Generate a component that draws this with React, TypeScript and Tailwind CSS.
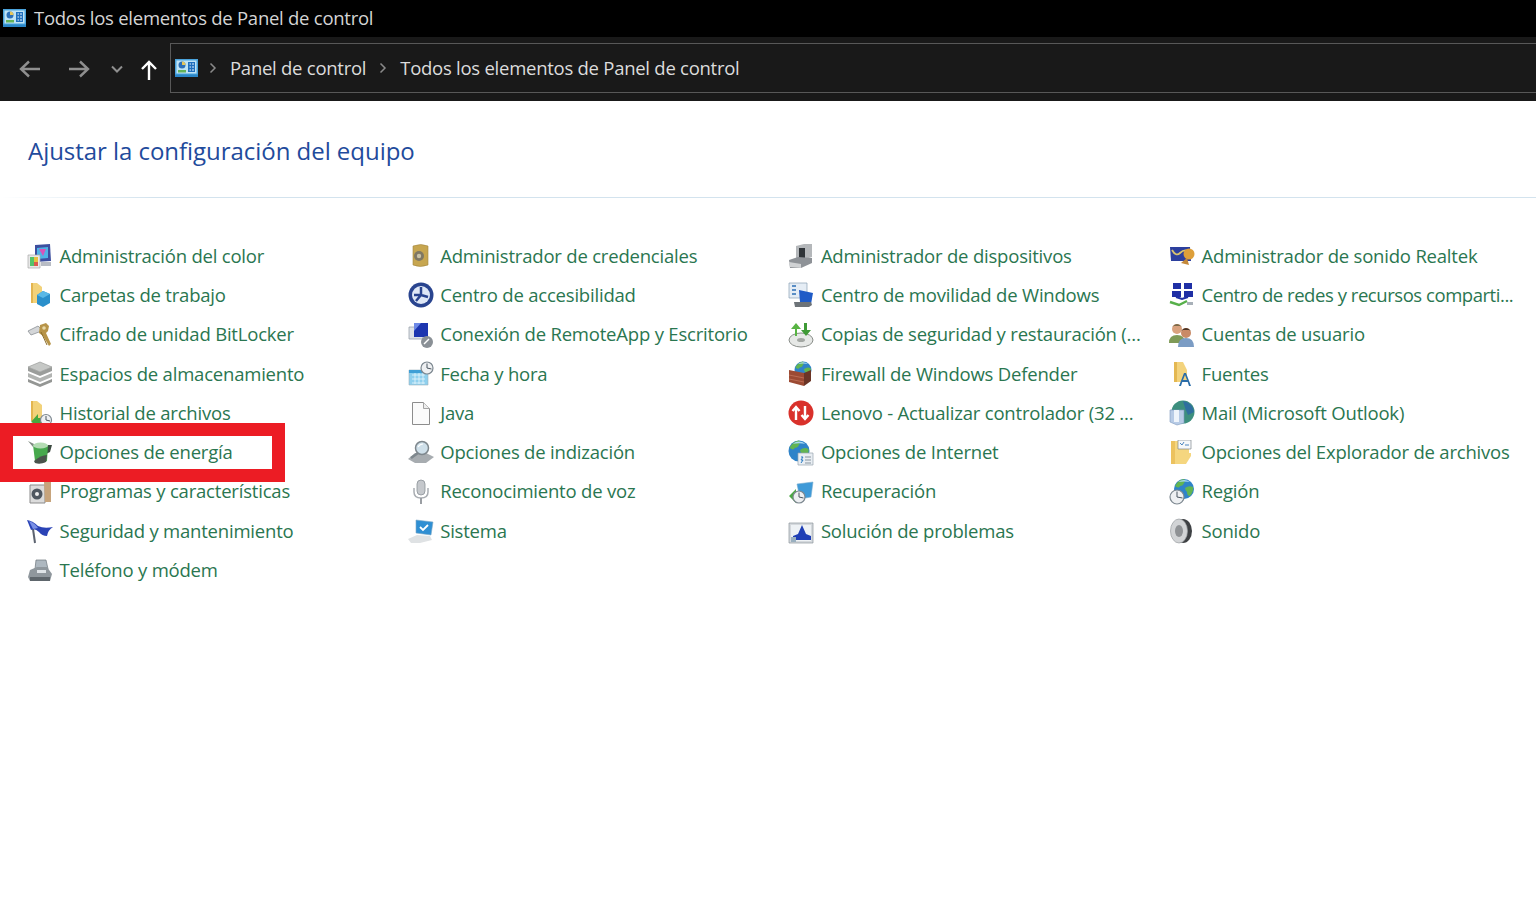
import React from "react";

const Svg = ({ children }: { children: React.ReactNode }) => (
  <svg viewBox="0 0 26 26" className="w-[26px] h-[26px] shrink-0 blur-[0.35px]">
    {children}
  </svg>
);

const Folder = () => (
  <>
    <path d="M4 1h6l5 4v16H4z" fill="#f2d27a" />
    <path d="M4 1h2v20H4z" fill="#e3b550" />
  </>
);

const Clock = ({ x, y, r }: { x: number; y: number; r: number }) => (
  <>
    <circle cx={x} cy={y} r={r} fill="#eef0f2" stroke="#7d8890" strokeWidth="1.2" />
    <path d={`M${x} ${y - r + 1.5}V${y}l${r - 1.5} 1`} stroke="#4b5660" strokeWidth="1" fill="none" />
  </>
);

// globe drawn at r=10 around 0,0 then moved into place
const Globe = ({ x, y, r }: { x: number; y: number; r: number }) => (
  <g transform={`translate(${x} ${y}) scale(${r / 10})`}>
    <circle r="10" fill="#2f83c9" />
    <path d="M-9-3q3-6 9-7 2 2 0 4-1 3-4 3-1 3-5 0z" fill="#62b552" />
    <path d="M1-1q4-3 8-1 1 4-3 9-3 0-3-4-2-2-2-4z" fill="#62b552" />
    <path d="M-6-7q6-4 12 0-6-1-12 0z" fill="#a9d8f2" />
  </g>
);

const icons: Record<string, React.ReactNode> = {
  color: (
    <Svg>
      <path d="M8 2l15-1 1 17-16 1z" fill="#3d4f9f" />
      <path d="M10 5l11-1v11l-11 1z" fill="#4fb4e6" />
      <path d="M12 6l7 0-3 7z" fill="#d854b8" />
      <path d="M1 12h12v13H1z" fill="#e8e8e8" stroke="#aaa" strokeWidth=".7" />
      <path d="M3 14h4v9H3z" fill="#54c36a" />
      <path d="M7 14h4v5H7z" fill="#e8c13f" />
      <path d="M7 19h4v4H7z" fill="#dc5a4e" />
      <path d="M14 19h10v4H14z" fill="#b8bcc4" />
    </Svg>
  ),
  work: (
    <Svg>
      <Folder />
      <path d="M16 9l7 3v9l-7 4-6-3v-9z" fill="#2a8fcb" />
      <path d="M10 13l6 3 7-4-7-3z" fill="#5ab8e6" />
    </Svg>
  ),
  bitlocker: (
    <Svg>
      <path d="M1 9l10-5 4 4-3 2-8 3z" fill="#d4d6d8" stroke="#8c9096" strokeWidth=".8" />
      <path d="M13 3l6-2 3 3-1 5-2 2 5 11-2 2-6-10-4-3z" fill="#b79449" />
      <circle cx="17" cy="6" r="1.800" fill="#e8d9a8" />
      <path d="M14 10l6 13" stroke="#8c6e2c" strokeWidth="1" />
    </Svg>
  ),
  storage: (
    <Svg>
      <path d="M1 6l12-5 12 5-12 5z" fill="#c6c8c6" stroke="#8f918f" strokeWidth=".6" />
      <path d="M1 6v4l12 5 12-5V6l-12 5z" fill="#9b9d9b" />
      <path d="M1 12v4l12 5 12-5v-4l-12 5z" fill="#b2b4b2" />
      <path d="M1 18v3l12 5 12-5v-3l-12 5z" fill="#949694" />
    </Svg>
  ),
  history: (
    <Svg>
      <Folder />
      <path d="M4 22l7-8v4h5v5h-6v2z" fill="#45a83f" />
      <Clock x={19} y={20} r={5.5} />
    </Svg>
  ),
  power: (
    <Svg>
      <path d="M1 1l6 3-1 3z" fill="#7e8a80" />
      <path d="M20 5h5l-2 7-4 2z" fill="#3c4a40" />
      <path d="M6 5h15l-1 16q-6 4-12 0z" fill="#47a94d" />
      <ellipse cx="13.500" cy="5.500" rx="7.500" ry="3" fill="#b4dcb3" />
      <path d="M7 21q7-6 13-6l-1 7q-6 3-11 1z" fill="#4a534c" />
    </Svg>
  ),
  programs: (
    <Svg>
      <path d="M3 6h15v18H3z" fill="#dcdcdc" stroke="#8b8b8b" />
      <path d="M17 3h7v20h-6z" fill="#c7a47c" />
      <circle cx="10" cy="15" r="5.500" fill="#4f5760" />
      <circle cx="10" cy="15" r="2" fill="#eee" />
    </Svg>
  ),
  security: (
    <Svg>
      <path d="M5 4l3 21" stroke="#5c6370" strokeWidth="2" />
      <path d="M0 2q6 1 11 6 6 3 15 1-5 3-6 9-5 0-8-4-4-4-8-2z" fill="#2a43b6" />
      <path d="M2 3q6 2 9 7l-5 1z" fill="#7a90e6" />
    </Svg>
  ),
  phone: (
    <Svg>
      <path d="M9 3h10l2 9H8z" fill="#aeb8c0" stroke="#6d767d" strokeWidth=".7" />
      <path d="M3 13l7-3h10l5 7-2 7H3l-2-4z" fill="#8f979d" />
      <path d="M3 20h20v4H3z" fill="#5e666c" />
      <path d="M10 13h9v3h-9z" fill="#dfe4e8" />
    </Svg>
  ),
  credentials: (
    <Svg>
      <path d="M5 3q8-3 15 0v19q-8 3-15 0z" fill="#c7a650" stroke="#a38740" strokeWidth=".6" />
      <circle cx="11" cy="13" r="5" fill="#7f7864" />
      <circle cx="11" cy="13" r="2.200" fill="#c9c2a6" />
    </Svg>
  ),
  access: (
    <Svg>
      <circle cx="13" cy="13" r="12.500" fill="#29448f" />
      <circle cx="13" cy="13" r="9" fill="#dfe8f6" />
      <path d="M13 5v8l7 2M13 13l-5 6M13 13H6" stroke="#29448f" strokeWidth="2.500" fill="none" />
    </Svg>
  ),
  remote: (
    <Svg>
      <path d="M1 5h14v12H1z" fill="#dfe3e8" stroke="#8f98a3" strokeWidth=".7" />
      <path d="M6 1h14v14H6z" fill="#1d36b0" />
      <path d="M6 1h7l-7 8z" fill="#6f8ae6" />
      <circle cx="19" cy="20" r="6" fill="#8a9096" />
      <path d="M16 22l5-5" stroke="#fff" strokeWidth="1.500" />
    </Svg>
  ),
  date: (
    <Svg>
      <path d="M1 9h19v15H1z" fill="#8fd0ee" stroke="#9fb2bd" strokeWidth=".6" />
      <path d="M1 9h19v3H1z" fill="#3f9fd6" />
      <path d="M4 14h13M4 18h13M4 22h13M7 12v11M11 12v11M15 12v11" stroke="#e7f6fd" strokeWidth=".8" />
      <Clock x={19} y={7} r={6} />
    </Svg>
  ),
  java: (
    <Svg>
      <path d="M4.500 2.500h11l6 6v16h-17z" fill="#fbfbfb" stroke="#8d8d8d" />
      <path d="M15.500 2.500v6h6" fill="#eeeeee" stroke="#a5a5a5" />
    </Svg>
  ),
  index: (
    <Svg>
      <path d="M0 19l7-6 11 0 8 4-8 6H7z" fill="#a7acb0" />
      <path d="M10 13l-7 5" stroke="#7e878d" strokeWidth="2.500" />
      <circle cx="14" cy="8" r="6.500" fill="#cfe0ea" stroke="#7e878d" strokeWidth="1.500" />
      <path d="M10 7q2-3 5-3" stroke="#fff" strokeWidth="1.200" fill="none" />
    </Svg>
  ),
  voice: (
    <Svg>
      <rect x="9" y="1" width="8" height="15" rx="4" fill="#c5c8cc" stroke="#8c9298" strokeWidth=".8" />
      <path d="M6 9v4q0 6 7 6t7-6V9" fill="none" stroke="#a9adb2" strokeWidth="1.500" />
      <path d="M13 19v6" stroke="#9a9ea3" strokeWidth="2" />
    </Svg>
  ),
  system: (
    <Svg>
      <path d="M8 2l17 2-2 13-15-2z" fill="#2f8fd3" stroke="#7fa9c6" strokeWidth=".6" />
      <path d="M12 9l3 3 5-5" stroke="#fff" strokeWidth="1.800" fill="none" />
      <path d="M0 21l9-4 13 1 2 4-12 3H3z" fill="#dfe2e4" />
    </Svg>
  ),
  devices: (
    <Svg>
      <path d="M8 3l8-2h8v13l-10 3H8z" fill="#b4b7ba" />
      <path d="M11 5h6v11h-6z" fill="#2f3438" />
      <path d="M1 17l9-3 14 1v5l-11 5H2z" fill="#8e9297" />
      <path d="M1 19l12 2v4l-11-1z" fill="#d0d2d4" />
    </Svg>
  ),
  mobility: (
    <Svg>
      <path d="M1 1h18v15H1z" fill="#e5edf5" stroke="#8aa0b5" strokeWidth=".7" />
      <path d="M4 4h4M4 8h4M4 12h4" stroke="#2c6fb5" strokeWidth="1.500" />
      <path d="M11 8l14 3-2 11-11-2z" fill="#1f5bc7" />
      <path d="M6 20h17l1 3-3 2H7z" fill="#6d7378" />
    </Svg>
  ),
  backup: (
    <Svg>
      <ellipse cx="13" cy="18" rx="12" ry="7" fill="#e6e8e6" stroke="#888c88" />
      <ellipse cx="13" cy="18" rx="4" ry="2" fill="#a3a7a3" />
      <path d="M7 14V7H3l5-6 5 6H9v7z" fill="#58b443" />
      <path d="M16 1v7h-3l5 6 5-6h-4V1z" fill="#3f9a36" />
    </Svg>
  ),
  firewall: (
    <Svg>
      <Globe x={15} y={9} r={8.500} />
      <path d="M1 9l15 3v13L1 21z" fill="#9c4a33" />
      <path d="M16 12l7-3v11l-7 5z" fill="#6b3526" />
      <path d="M1 14l15 3M1 18l15 3" stroke="#c77a60" strokeWidth=".7" />
    </Svg>
  ),
  lenovo: (
    <Svg>
      <circle cx="13" cy="13" r="12.500" fill="#d9312b" />
      <path d="M8 20V8M4.500 11L8 7l3.500 4" stroke="#fff" strokeWidth="2.400" fill="none" />
      <path d="M17 6v12M13.500 15l3.500 4 3.500-4" stroke="#fff" strokeWidth="2.400" fill="none" />
    </Svg>
  ),
  internet: (
    <Svg>
      <Globe x={11} y={11} r={10.500} />
      <path d="M10 13h15v12H10z" fill="#e9eef3" stroke="#98a5b0" strokeWidth=".7" />
      <path d="M13 17h2l-2 3h2l-2 3" stroke="#2a7cc4" strokeWidth="1" fill="none" />
      <path d="M17 17h6M17 20h6M17 23h6" stroke="#8995a0" strokeWidth="1" />
    </Svg>
  ),
  recovery: (
    <Svg>
      <path d="M9 5l16-2-2 15-11 2z" fill="#3f9ad8" stroke="#7aaed2" strokeWidth=".6" />
      <path d="M1 17l7-7v3h6v8H8v3z" fill="#4aa843" />
      <Clock x={11} y={18} r={6} />
    </Svg>
  ),
  trouble: (
    <Svg>
      <path d="M1 5h24v20H1z" fill="#d5d9dd" stroke="#8d959c" strokeWidth=".7" />
      <path d="M3 7h20v16H3z" fill="#eef2f5" />
      <path d="M5 22v-4l5-2 4-9 4 9 5 2v4z" fill="#1f3fb5" />
      <path d="M3 19h5v5H3z" fill="#9ab0c0" />
    </Svg>
  ),
  realtek: (
    <Svg>
      <path d="M1 4h20l1 14H2z" fill="#2c3f9e" />
      <path d="M3 7q4 7 8 3t8-2" stroke="#d9c46f" strokeWidth="1.800" fill="none" />
      <circle cx="20" cy="11" r="5.500" fill="#dd9f3a" />
      <path d="M12 20l6-5 2 7z" fill="#c4883a" />
    </Svg>
  ),
  network: (
    <Svg>
      <path d="M4 1h8v6H4zM15 1h8v6h-8zM3 9h9v6H3zM15 9h9v6h-9z" fill="#1f2fa5" />
      <path d="M7 15l6 2 6-2" stroke="#1f2fa5" strokeWidth="2" fill="none" />
      <path d="M1 20l9 3 8-4" stroke="#57b04a" strokeWidth="2.400" fill="none" />
      <path d="M18 20h6v3h-6z" fill="#a8b0b8" />
    </Svg>
  ),
  users: (
    <Svg>
      <circle cx="8" cy="7" r="5" fill="#d9a27e" />
      <path d="M3 5q5-6 10 0l-2-1H5z" fill="#7b6a4a" />
      <path d="M0 21q0-8 8-8t8 8z" fill="#7f9a57" />
      <circle cx="17" cy="11" r="5" fill="#c98a66" />
      <path d="M12 9q5-6 10 0l-2-1h-6z" fill="#4a3526" />
      <path d="M9 25q0-9 8-9t8 9z" fill="#7b9cc4" />
    </Svg>
  ),
  fonts: (
    <Svg>
      <path d="M5 1h9l4 8v12H5z" fill="#f3d37d" />
      <path d="M5 1h3v20H5z" fill="#e4b852" />
      <path d="M10 25l5-13h2l5 13h-2l-1.300-4h-5.400l-1.300 4zM14 19h4l-2-5z" fill="#2a6ca8" />
    </Svg>
  ),
  mail: (
    <Svg>
      <circle cx="14" cy="12" r="11.500" fill="#3d8f7e" />
      <path d="M14 1q10 2 11 11l-6 3q-3-6-5-14z" fill="#2f6f9f" />
      <path d="M1 10h14v13l-7 2-7-3z" fill="#b7cbe6" stroke="#7e98bd" strokeWidth=".6" />
      <path d="M5 10h5v12H5z" fill="#eef4fb" />
    </Svg>
  ),
  folderOpts: (
    <Svg>
      <path d="M2 1h18v12l2 0v3l-5 8H2z" fill="#f5d67f" />
      <path d="M2 1h4v23H2z" fill="#ecc25f" />
      <path d="M9 0h13v9H9z" fill="#f6f8fa" stroke="#7e868e" strokeWidth=".7" />
      <path d="M11 3l2 2 2-3M16 5h4" stroke="#3a78b8" strokeWidth=".9" fill="none" />
    </Svg>
  ),
  region: (
    <Svg>
      <Globe x={15} y={10} r={10} />
      <Clock x={8} y={18} r={7} />
    </Svg>
  ),
  sound: (
    <Svg>
      <ellipse cx="14" cy="13" rx="9" ry="12" fill="#3e4144" />
      <ellipse cx="10" cy="13" rx="8.500" ry="12" fill="#d2d4d6" stroke="#9a9da0" strokeWidth=".7" />
      <ellipse cx="10" cy="13" rx="4" ry="6" fill="#8f9295" />
    </Svg>
  ),
};

const columns = [
  [
    ["color", "Administración del color"],
    ["work", "Carpetas de trabajo"],
    ["bitlocker", "Cifrado de unidad BitLocker"],
    ["storage", "Espacios de almacenamiento"],
    ["history", "Historial de archivos"],
    ["power", "Opciones de energía"],
    ["programs", "Programas y características"],
    ["security", "Seguridad y mantenimiento"],
    ["phone", "Teléfono y módem"],
  ],
  [
    ["credentials", "Administrador de credenciales"],
    ["access", "Centro de accesibilidad"],
    ["remote", "Conexión de RemoteApp y Escritorio"],
    ["date", "Fecha y hora"],
    ["java", "Java"],
    ["index", "Opciones de indización"],
    ["voice", "Reconocimiento de voz"],
    ["system", "Sistema"],
  ],
  [
    ["devices", "Administrador de dispositivos"],
    ["mobility", "Centro de movilidad de Windows"],
    ["backup", "Copias de seguridad y restauración (..."],
    ["firewall", "Firewall de Windows Defender"],
    ["lenovo", "Lenovo - Actualizar controlador (32 ..."],
    ["internet", "Opciones de Internet"],
    ["recovery", "Recuperación"],
    ["trouble", "Solución de problemas"],
  ],
  [
    ["realtek", "Administrador de sonido Realtek"],
    ["network", "Centro de redes y recursos comparti..."],
    ["users", "Cuentas de usuario"],
    ["fonts", "Fuentes"],
    ["mail", "Mail (Microsoft Outlook)"],
    ["folderOpts", "Opciones del Explorador de archivos"],
    ["region", "Región"],
    ["sound", "Sonido"],
  ],
];

const PanelIcon = () => (
  <svg viewBox="0 0 23 18" className="w-[23px] h-[18px] shrink-0">
    <path d="M0 0h23v18H0z" fill="#4aa3dc" />
    <path d="M1.500 1.500h20v13h-20z" fill="#bfe3f6" />
    <circle cx="7" cy="6" r="3.500" fill="#2d6fb8" />
    <path d="M7 6V2.500A3.500 3.500 0 0 1 10.500 6z" fill="#e6c65a" />
    <path d="M3 11h8v2.500H3z" fill="#62b35a" />
    <path d="M13 3h7v10h-7z" fill="#1f6fbe" />
    <path d="M14.500 5h1.500M17 5h2M14.500 8h1.500M17 8h2M14.500 11h1.500M17 11h2" stroke="#e6f4fc" strokeWidth="1" />
    <path d="M0 15.500h23V18H0z" fill="#2a86c8" />
  </svg>
);

const Chevron = () => (
  <svg viewBox="0 0 8 12" className="w-2 h-3 shrink-0" fill="none" stroke="#8a8a8a" strokeWidth="1.500">
    <path d="M1.500 1.500L6 6l-4.500 4.500" />
  </svg>
);

export default function App() {
  return (
    <div className="h-[907px] bg-white overflow-hidden font-['Open_Sans',sans-serif]">
      <div className="h-[37px] bg-black flex items-center pl-[3px] pb-[1px] gap-[8px] text-[#d4d4d4] text-[18.5px] tracking-[-0.26px]">
        <PanelIcon />
        <span>Todos los elementos de Panel de control</span>
      </div>

      <div className="h-[64px] bg-[#191919] flex">
        <div className="w-[170px] flex items-center pl-[19px] pb-[1px]">
          <svg viewBox="0 0 22 18" className="w-[22px] h-[18px]" fill="none" stroke="#8f8f8f" strokeWidth="2.400">
            <path d="M21 9H2M10 1.500L2 9l8 7.500" />
          </svg>
          <svg viewBox="0 0 22 18" className="w-[22px] h-[18px] ml-[27px]" fill="none" stroke="#8f8f8f" strokeWidth="2.400">
            <path d="M1 9h19M12 1.500L20 9l-8 7.500" />
          </svg>
          <svg viewBox="0 0 12 8" className="w-3 h-2 ml-[21px]" fill="none" stroke="#8f8f8f" strokeWidth="2">
            <path d="M1 1.500l5 5 5-5" />
          </svg>
          <svg viewBox="0 0 16 20" className="w-4 h-5 ml-[18px] mt-[3px]" fill="none" stroke="#ffffff" strokeWidth="2.400">
            <path d="M8 20V2M1 9l7-7 7 7" />
          </svg>
        </div>
        <div className="flex-1 mt-[6px] h-[50px] border border-r-0 border-[#585858] flex items-center pl-[4px] text-[#dcdcdc] text-[18.5px] tracking-[-0.26px]">
          <PanelIcon />
          <span className="ml-[11px]"><Chevron /></span>
          <span className="ml-[13px]">Panel de control</span>
          <span className="ml-[13px]"><Chevron /></span>
          <span className="ml-[13px]">Todos los elementos de Panel de control</span>
        </div>
      </div>

      <div className="h-[96px] pl-[28px] pt-[32px] text-[#1f4b9c] text-[24px] leading-[36px] tracking-[-0.04px]">
        Ajustar la configuración del equipo
      </div>
      <div className="h-px bg-gradient-to-r from-white to-[#d3e3ee] to-[10%]" />

      <div className="flex pl-[27px] pt-[38.4px]">
        {columns.map((col, i) => (
          <div key={i} className="w-[380.7px] shrink-0 flex flex-col">
            {col.map(([icon, label]) => (
              <div key={label} className="relative h-[39.3px] flex items-center gap-[6.5px]">
                {label === "Opciones de energía" && (
                  <div className="absolute left-[-27px] top-[-9.4px] w-[285px] h-[59px] border-[13px] border-[#ec1c24]" />
                )}
                <span className="relative">{icons[icon]}</span>
                <span
                  className={
                    label === "Centro de redes y recursos comparti..."
                      ? "relative text-[#2a7650] text-[18.5px] tracking-[-0.45px] pb-[1px] whitespace-nowrap"
                      : "relative text-[#2a7650] text-[18.5px] tracking-[-0.2px] pb-[1px] whitespace-nowrap"
                  }
                >
                  {label}
                </span>
              </div>
            ))}
          </div>
        ))}
      </div>
    </div>
  );
}
